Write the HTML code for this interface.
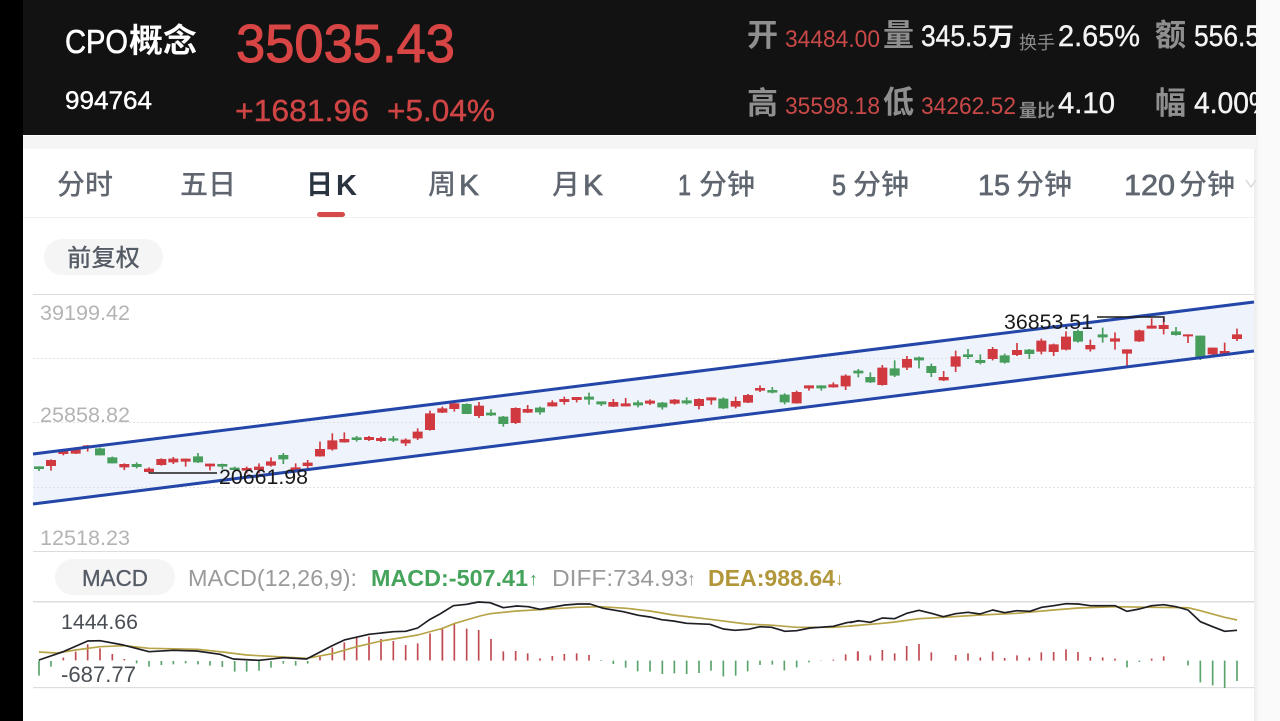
<!DOCTYPE html>
<html lang="zh"><head><meta charset="utf-8"><title>CPO概念</title>
<style>
html,body{margin:0;padding:0;width:1280px;height:721px;overflow:hidden;background:#fff}
svg{display:block}
text{font-family:"Liberation Sans","Noto Sans CJK SC",sans-serif;white-space:pre}
.cj{font-family:"Noto Sans CJK SC","Liberation Sans",sans-serif}
.hg{fill:#8f8f8f;font-weight:700;font-size:31px}
.hr{fill:#c94848;font-size:24px}
.hw{fill:#f4f4f4;font-size:30px;stroke:#f4f4f4;stroke-width:.4}
.hs{fill:#8a8a8a;font-size:18px}
.tab{fill:#5f6670;font-size:28px;font-weight:500}
.tn{fill:#5f6670;font-size:29px;stroke:#5f6670;stroke-width:.7}
.yl{fill:#b4b4b4;font-size:21px}
.wr,.br{stroke:#d0393f;fill:none}.wg,.bg{stroke:#479e5c;fill:none}
.wr,.wg{stroke-width:5}.br,.bg{stroke-width:30}
.mr{stroke:#bf4a50;stroke-width:5;fill:none}.mg{stroke:#5aa46c;stroke-width:5;fill:none}
.lk{stroke:#1e1e24;stroke-width:5;fill:none;stroke-linejoin:round}.ly{stroke:#b7a348;stroke-width:5;fill:none;stroke-linejoin:round}
</style></head><body>
<svg width="1280" height="721" viewBox="0 0 1280 721" xmlns="http://www.w3.org/2000/svg">
<defs><linearGradient id="sh" x1="0" x2="1" y1="0" y2="0"><stop offset="0" stop-color="#ececec"/><stop offset="1" stop-color="#fafafa"/></linearGradient>
<clipPath id="hc"><rect x="23" y="0" width="1233" height="136"/></clipPath></defs>
<rect width="1280" height="721" fill="#fff"/>
<rect x="0" y="0" width="23" height="721" fill="#000"/>
<rect x="1254" y="136" width="5" height="585" fill="url(#sh)"/>
<rect x="1259" y="0" width="21" height="721" fill="#fafafa"/>
<rect x="1256" y="0" width="3" height="136" fill="#f6f6f6"/>
<rect x="23" y="0" width="1233" height="135" fill="#121212"/>
<rect x="23" y="136" width="1233" height="13" fill="#f5f5f5"/>
<rect x="23" y="217" width="1231" height="1" fill="#f0f0f0"/>

<g clip-path="url(#hc)">
<text x="65" y="53" fill="#fff" stroke="#fff" stroke-width=".6" font-size="33" textLength="63" lengthAdjust="spacingAndGlyphs">CPO</text>
<text class="cj" x="129" y="52" fill="#fff" font-size="33" font-weight="700" textLength="68" lengthAdjust="spacingAndGlyphs">概念</text>
<text x="65" y="109" fill="#fff" stroke="#fff" stroke-width=".4" font-size="25" textLength="87" lengthAdjust="spacingAndGlyphs">994764</text>
<text x="236" y="62" fill="#d84545" stroke="#d84545" stroke-width="1" font-size="54" textLength="219" lengthAdjust="spacingAndGlyphs">35035.43</text>
<text x="235" y="121" fill="#cf4444" stroke="#cf4444" stroke-width=".4" font-size="31" textLength="134" lengthAdjust="spacingAndGlyphs">+1681.96</text>
<text x="387" y="121" fill="#cf4444" stroke="#cf4444" stroke-width=".4" font-size="31" textLength="108" lengthAdjust="spacingAndGlyphs">+5.04%</text>

<text class="cj hg" x="747" y="46">开</text>
<text class="hr" x="785" y="47" textLength="95" lengthAdjust="spacingAndGlyphs">34484.00</text>
<text class="cj hg" x="883" y="46">量</text>
<text class="hw" x="921" y="46" textLength="66" lengthAdjust="spacingAndGlyphs">345.5</text>
<text class="cj" x="988" y="46" fill="#f4f4f4" font-size="26" font-weight="700">万</text>
<text class="cj hs" x="1019" y="49" textLength="36" lengthAdjust="spacingAndGlyphs">换手</text>
<text class="hw" x="1058" y="46" textLength="82" lengthAdjust="spacingAndGlyphs">2.65%</text>
<text class="cj hg" x="1155" y="46">额</text>
<text class="hw" x="1194" y="46" textLength="66" lengthAdjust="spacingAndGlyphs">556.5</text>

<text class="cj hg" x="747" y="114">高</text>
<text class="hr" x="785" y="114" textLength="95" lengthAdjust="spacingAndGlyphs">35598.18</text>
<text class="cj hg" x="883" y="113">低</text>
<text class="hr" x="921" y="114" textLength="95" lengthAdjust="spacingAndGlyphs">34262.52</text>
<text class="cj hs" x="1019" y="117" font-weight="700" textLength="36" lengthAdjust="spacingAndGlyphs">量比</text>
<text class="hw" x="1058" y="113" textLength="57" lengthAdjust="spacingAndGlyphs">4.10</text>
<text class="cj hg" x="1155" y="114">幅</text>
<text class="hw" x="1194" y="113" textLength="80" lengthAdjust="spacingAndGlyphs">4.00%</text>
</g>

<text class="cj tab" x="57" y="194">分时</text>
<text class="cj tab" x="180" y="194">五日</text>
<text class="cj" x="306" y="194" fill="#2a3440" font-size="27" font-weight="700">日</text>
<text x="336" y="195" fill="#2a3440" font-size="29" font-weight="700" textLength="21" lengthAdjust="spacingAndGlyphs">K</text>
<text class="cj tab" x="428" y="194">周</text><text class="tn" x="459" y="195" textLength="20" lengthAdjust="spacingAndGlyphs">K</text>
<text class="cj tab" x="552" y="194">月</text><text class="tn" x="583" y="195" textLength="20" lengthAdjust="spacingAndGlyphs">K</text>
<text class="tn" x="678" y="195" textLength="13" lengthAdjust="spacingAndGlyphs">1</text><text class="cj tab" x="699" y="194">分钟</text>
<text class="tn" x="832" y="195" textLength="14" lengthAdjust="spacingAndGlyphs">5</text><text class="cj tab" x="853" y="194">分钟</text>
<text class="tn" x="978" y="195" textLength="32" lengthAdjust="spacingAndGlyphs">15</text><text class="cj tab" x="1016" y="194">分钟</text>
<text class="tn" x="1124" y="195" textLength="51" lengthAdjust="spacingAndGlyphs">120</text><text class="cj tab" x="1179" y="194">分钟</text>
<path d="M1246 180l5 7 5-7" fill="none" stroke="#dcdcdc" stroke-width="1.6"/>
<rect x="317" y="212" width="28" height="5" rx="2.5" fill="#d64a4a"/>

<rect x="44" y="239" width="119" height="36" rx="18" fill="#f5f5f5"/>
<text class="cj" x="67" y="266" fill="#555c66" font-size="24" font-weight="500" textLength="73" lengthAdjust="spacingAndGlyphs">前复权</text>

<rect x="33" y="294" width="1221" height="1" fill="#dcdcdc"/>
<rect x="33" y="551" width="1221" height="1" fill="#dcdcdc"/>
<path d="M33 358.500H1254M33 422.500H1254M33 487.500H1254" stroke="#dcdcdc" stroke-dasharray="2 2" fill="none"/>
<polygon points="33,454 1254,302 1254,351 33,504" fill="#eef3fc"/>
<path d="M33 358.500H1254M33 422.500H1254M33 487.500H1254" stroke="#e2e2e2" stroke-dasharray="2 2" fill="none"/>
<text class="yl" x="40" y="320" textLength="90" lengthAdjust="spacingAndGlyphs">39199.42</text>
<text class="yl" x="40" y="422" textLength="90" lengthAdjust="spacingAndGlyphs">25858.82</text>
<text class="yl" x="40" y="545" textLength="90" lengthAdjust="spacingAndGlyphs">12518.23</text>

<g transform="translate(20 380) scale(.33333)">
<path class="wr" d="M93 238V272M130 208V226M167 202V222M203 195V215M313 250V270M387 262V280M424 235V257M460 231V252M497 236V260M570 251V271M680 260V280M717 250V280M753 232V260M827 250V275M863 240V264M900 185V230M937 160V212M973 157V188M1047 168V183M1083 170V186M1157 175V198M1193 145V180M1230 92V152"/>
<path class="br" d="M93 240V258M130 213V222M167 208V221M203 196V204M313 252V262M387 266V276M424 237V255M460 236V247M497 236V245M570 251V259M680 264V272M717 260V270M753 244V257M827 262V270M863 248V258M900 207V229M937 181V208M973 177V187M1047 171V180M1083 174V183M1157 179V190M1193 155V175M1230 100V150"/>
<path class="wg" d="M57 259V273M240 203V226M277 230V250M350 247V265M534 219V249M607 251V268M644 260V275M790 219V252M1010 168V185M1120 168V186"/>
<path class="bg" d="M57 259V267M240 205V226M277 232V250M350 252V261M534 229V247M607 252V260M644 263V270M790 225V238M1010 172V180M1120 175V182"/>
</g>
<g transform="translate(430 340) scale(.33333)">
<path class="wr" d="M37 200V219M73 186V215M147 186V234M257 202V252M293 195V219M367 181V200M403 170V194M440 171V187M550 177V201M587 174V199M660 178V195M734 177V194M807 175V208M844 172V194M917 170V205M954 162V189M990 136V156M1100 152V191M1137 136V152M1210 127V143M1247 103V150"/>
<path class="br" d="M37 205V218M73 190V207M147 197V228M257 204V249M293 207V218M367 187V199M403 177V186M440 171V180M550 186V200M587 190V199M660 182V191M734 179V191M807 177V198M844 172V181M917 183V200M954 165V188M990 144V152M1100 156V190M1137 136V145M1210 133V142M1247 107V139"/>
<path class="wg" d="M110 190V222M183 208V228M220 228V260M330 200V224M477 158V194M514 185V198M624 181V202M697 186V209M770 172V194M880 172V207M1027 141V160M1064 160V193M1174 136V152"/>
<path class="bg" d="M110 192V222M183 218V226M220 230V252M330 203V217M477 170V179M514 184V193M624 187V196M697 188V202M770 181V190M880 176V205M1027 150V158M1064 164V187M1174 136V145"/>
</g>
<g transform="translate(850 295) scale(.33333)">
<path class="wr" d="M97 210V272M171 183V225M281 228V258M317 167V231M428 156V196M501 144V183M574 131V178M611 146V183M648 109V166M721 134V170M795 112V164M831 163V216M868 104V141M905 70V101M941 70V118M1014 118V144M1088 158V185M1124 143V176M1161 101V138"/>
<path class="br" d="M97 218V270M171 192V218M281 246V256M317 184V215M428 162V192M501 165V180M574 137V170M611 148V171M648 125V164M721 150V163M795 130V140M831 163V176M868 106V139M905 92V101M941 90V102M1014 118V124M1088 158V178M1124 168V176M1161 118V132"/>
<path class="wg" d="M25 222V247M61 232V264M134 196V246M207 185V220M244 206V246M354 162V192M391 178V208M464 176V206M538 162V192M684 104V143M758 98V143M978 96V122M1051 122V195"/>
<path class="bg" d="M25 227V235M61 246V262M134 220V242M207 187V196M244 213V234M354 178V186M391 195V204M464 181V203M538 164V177M684 108V140M758 118V127M978 109V120M1051 122V190"/>
</g>
<path d="M33 454L1254 302M33 504L1254 351" stroke="#2346a8" stroke-width="3" fill="none"/>
<path d="M149 473H217M1097 317H1164V322" stroke="#1c1c1c" stroke-width="1.4" fill="none"/>
<text x="219" y="484" fill="#1a1a1a" font-size="21.500" textLength="89" lengthAdjust="spacingAndGlyphs">20661.98</text>
<text x="1004" y="329" fill="#1a1a1a" font-size="21.500" textLength="89" lengthAdjust="spacingAndGlyphs">36853.51</text>

<rect x="55" y="559" width="120" height="36" rx="18" fill="#f5f5f5"/>
<text x="82" y="586" fill="#555c66" stroke="#555c66" stroke-width=".3" font-size="23" textLength="66" lengthAdjust="spacingAndGlyphs">MACD</text>
<text x="188" y="586" fill="#9a9a9a" font-size="23" textLength="169" lengthAdjust="spacingAndGlyphs">MACD(12,26,9):</text>
<text x="371" y="586" fill="#45a35b" font-size="23" font-weight="700" textLength="157" lengthAdjust="spacingAndGlyphs">MACD:-507.41</text>
<text x="529" y="585" fill="#45a35b" font-size="18">↑</text>
<text x="552" y="586" fill="#9a9a9a" font-size="23" textLength="136" lengthAdjust="spacingAndGlyphs">DIFF:734.93</text>
<text x="687" y="585" fill="#9a9a9a" font-size="18">↑</text>
<text x="708" y="586" fill="#b2963a" font-size="23" font-weight="700" textLength="127" lengthAdjust="spacingAndGlyphs">DEA:988.64</text>
<text x="835" y="585" fill="#b2963a" font-size="18">↓</text>
<rect x="33" y="601" width="1221" height="1.500" fill="#dedede"/>
<rect x="33" y="687" width="1221" height="1.200" fill="#dedede"/>

<g transform="translate(20 555) scale(.33333)">
<path class="mg" d="M57 316V362M93 318V335M350 316V325M387 318V335M424 318V330M460 318V328M497 318V325M534 318V328M570 318V332M607 318V336M644 318V350M680 318V350M717 318V347M753 318V338M790 318V326M827 318V332M863 318V326"/>
<path class="mr" d="M130 308V316M167 290V316M203 268V316M240 280V316M277 297V316M313 312V316M900 305V316M937 278V316M973 262V316M1010 248V316M1047 245V316M1083 252V316M1120 258V316M1157 270V316M1193 265V316M1230 235V316M1267 218V316"/>
</g>
<g transform="translate(440 590) scale(.33333)">
<path class="mr" d="M7 118V212M43 100V212M80 116V212M116 120V212M153 147V212M190 184V212M227 183V212M263 190V212M300 205V212M337 198V212M373 192V212M410 190V212M447 195V212M1180 209V212M1217 193V212M1253 184V212"/>
<path class="mg" d="M483 211V213M520 212V222M557 212V233M593 212V244M630 212V245M667 212V252M703 212V250M740 212V252M777 212V249M813 212V242M850 212V259M887 212V257M923 212V244M960 212V225M997 212V224M1033 212V241M1070 212V232M1107 212V217M1143 212V213"/>
</g>
<g transform="translate(850 590) scale(.33333)">
<path class="mr" d="M24 184V212M61 196V212M97 180V212M134 190V212M170 168V212M207 162V212M244 187V212M317 195V212M354 190V212M391 202V212M428 185V212M464 204V212M501 196V212M538 203V212M574 187V212M611 186V212M648 178V212M684 186V212M721 201V212M758 202V212M795 206V212M905 206V212M941 199V212"/>
<path class="mg" d="M831 212V232M868 212V216M1014 212V226M1051 212V277M1088 212V286M1124 212V294M1161 212V273"/>
</g>

<g transform="translate(20 555) scale(.33333)">
<path class="ly" d="M57 291L110 294 167 285 240 275 313 272 387 280 533 283 607 291 680 300 753 304 860 310 937 296 1010 275 1083 258 1193 240 1260 222"/>
<path class="lk" d="M57 315L130 290 203 258 240 257 310 270 387 290 460 286 530 288 600 298 640 312 717 316 790 308 860 312 937 272 973 255 1047 238 1120 230 1157 229 1193 219 1230 193 1260 177"/>
</g>
<g transform="translate(440 590) scale(.33333)">
<path class="ly" d="M0 118L45 100 120 78 150 71 230 63 300 59 410 52 480 50 560 55 630 63 700 75 810 88 920 102 1000 106 1070 112 1180 112 1260 106"/>
<path class="lk" d="M0 72L40 47 80 43 115 36 150 38 190 53 230 48 265 50 300 58 375 45 415 42 450 42 490 55 550 65 595 76 630 81 665 89 700 93 740 100 810 103 850 117 885 121 925 118 960 110 995 112 1035 124 1070 122 1110 114 1180 109 1220 98 1260 92"/>
</g>
<g transform="translate(850 590) scale(.33333)">
<path class="ly" d="M0 108L97 100 134 96 207 86 280 82 390 75 500 70 611 60 685 54 795 50 905 52 1014 53 1051 62 1124 82 1161 90"/>
<path class="lk" d="M0 98L25 92 61 97 97 84 134 86 170 70 207 61 244 70 280 80 317 71 354 67 390 72 428 60 464 68 500 62 540 64 575 52 611 47 648 41 685 42 721 47 795 47 831 64 868 57 905 47 941 44 978 50 1014 60 1051 95 1088 110 1124 124 1161 121"/>
</g>
<text x="61" y="629" fill="#4a4f55" font-size="21.500" textLength="77" lengthAdjust="spacingAndGlyphs">1444.66</text>
<text x="61" y="682" fill="#4a4f55" font-size="22" textLength="75" lengthAdjust="spacingAndGlyphs">-687.77</text>
</svg>
</body></html>
